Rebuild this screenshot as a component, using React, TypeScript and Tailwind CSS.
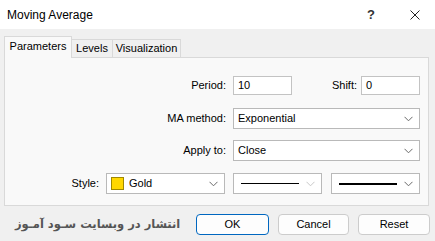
import React from 'react';

const font = { fontFamily: '"Liberation Sans", Arial, sans-serif' };

function Chevron({ light }: { light?: boolean }) {
  return (
    <svg width="9" height="6" viewBox="0 0 9 6" className="shrink-0">
      <path d="M0.5 0.8 L4.5 4.8 L8.5 0.8" fill="none" stroke={light ? '#c8c8c8' : '#6a6a6a'} strokeWidth="1" />
    </svg>
  );
}

function Select({ className, children, light }: { className: string; children?: React.ReactNode; light?: boolean }) {
  return (
    <div className={`h-[21px] border border-[#b9b9b9] bg-white flex items-center pl-[4px] pr-[6px] ${className}`}>
      <div className="flex-1 flex items-center min-w-0">{children}</div>
      <Chevron light={light} />
    </div>
  );
}

export default function App() {
  return (
    <div className="w-[435px] h-[241px] bg-[#f0f0f0] text-[11px] text-black overflow-hidden" style={font}>
      {/* title bar */}
      <div className="h-[29px] bg-white flex items-center pl-[7px] pr-[15px]">
        <span className="text-[12px] flex-1">Moving Average</span>
        <span className="text-[13px] font-bold w-[6px] mr-[37px] text-[#333]">?</span>
        <svg width="10" height="10" viewBox="0 0 10 10">
          <path d="M0.5 0.5 L9.5 9.5 M9.5 0.5 L0.5 9.5" stroke="#222" strokeWidth="1" />
        </svg>
      </div>

      {/* tabs */}
      <div className="flex items-end pl-[4px] pt-[7px] h-[28px] relative z-10">
        <div className="h-[22px] w-[68px] border border-b-0 border-[#d9d9d9] bg-[#f9f9f9] flex items-center justify-center pb-[2px] -mb-px">
          Parameters
        </div>
        <div className="h-[18px] w-[41px] border border-l-0 border-b-0 border-[#d9d9d9] bg-[#f0f0f0] flex items-center justify-center">
          Levels
        </div>
        <div className="h-[18px] w-[68px] border border-l-0 border-b-0 border-[#d9d9d9] bg-[#f0f0f0] flex items-center justify-center">
          Visualization
        </div>
      </div>

      {/* panel */}
      <div className="ml-[4px] w-[425px] h-[149px] border border-[#d9d9d9] bg-[#f9f9f9] flex flex-col">
        <div className="flex items-center mt-[18px] h-[19px]">
          <div className="w-[221px] text-right">Period:</div>
          <div className="ml-[7px] w-[59px] h-[19px] border border-[#c3c3c3] bg-white flex items-center pl-[4px]">10</div>
          <div className="w-[65px] text-right">Shift:</div>
          <div className="ml-[4px] w-[59px] h-[19px] border border-[#c3c3c3] bg-white flex items-center pl-[4px]">0</div>
        </div>
        <div className="flex items-center mt-[13px]">
          <div className="w-[221px] text-right">MA method:</div>
          <Select className="ml-[7px] w-[187px]">Exponential</Select>
        </div>
        <div className="flex items-center mt-[11px]">
          <div className="w-[221px] text-right">Apply to:</div>
          <Select className="ml-[7px] w-[187px]">Close</Select>
        </div>
        <div className="flex items-center mt-[12px]">
          <div className="w-[94px] text-right">Style:</div>
          <Select className="ml-[7px] w-[119px]">
            <span className="w-[13px] h-[13px] bg-[#ffd700] border border-[#a08800] mr-[5px]" />
            Gold
          </Select>
          <Select className="ml-[8px] w-[89px]" light>
            <span className="block w-[58px] h-px bg-black ml-[3px]" />
          </Select>
          <Select className="ml-[9px] w-[89px]">
            <span className="block w-[58px] h-[2px] bg-black ml-[3px]" />
          </Select>
        </div>
      </div>

      {/* bottom */}
      <div className="flex items-center h-[36px] pl-[15px] pr-[5px]">
        <div
          className="flex-1 text-[11.5px] font-bold text-[#555] whitespace-nowrap pt-[1px]"
          dir="rtl"
          style={{ fontFamily: '"DejaVu Sans", sans-serif', textAlign: 'left' }}
        >
          انتشار در وبسایت سـود آمـوز
        </div>
        <div className="flex gap-[9px]">
          <button className="w-[73px] h-[21px] rounded-[4px] border border-[#0067c0] bg-[#fdfdfd]">OK</button>
          <button className="w-[71px] h-[21px] rounded-[4px] border border-[#cccccc] bg-[#fdfdfd]">Cancel</button>
          <button className="w-[72px] h-[21px] rounded-[4px] border border-[#cccccc] bg-[#fdfdfd]">Reset</button>
        </div>
      </div>
    </div>
  );
}
